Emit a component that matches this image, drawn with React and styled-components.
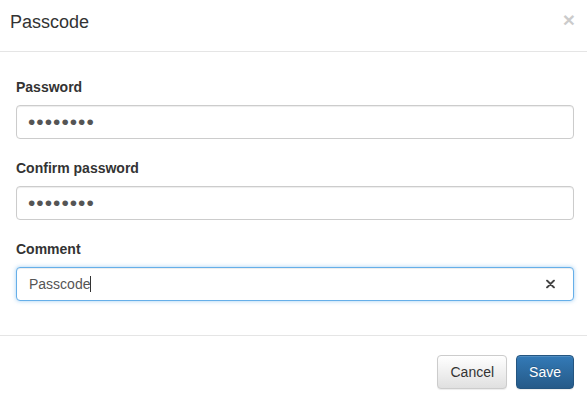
import React, { useState } from "react";
import styled, { createGlobalStyle, css } from "styled-components";

const GlobalStyle = createGlobalStyle`
  html, body {
    margin: 0;
    padding: 0;
    background: #fff;
  }
  body {
    font-family: "Liberation Sans", Arial, Helvetica, sans-serif;
    font-size: 14px;
    color: #333;
  }
  * {
    box-sizing: border-box;
  }
`;

const Modal = styled.div`
  width: 587px;
  height: 401px;
  background: #fff;
  display: flex;
  flex-direction: column;
`;

const Header = styled.div`
  height: 52px;
  padding: 9px 10px 0 10px;
  border-bottom: 1px solid #e5e5e5;
  display: flex;
  justify-content: space-between;
  align-items: flex-start;
`;

const Title = styled.h4`
  margin: 0;
  font-size: 18px;
  font-weight: normal;
  line-height: 26px;
  color: #333;
`;

const Close = styled.button`
  border: 0;
  background: transparent;
  padding: 0;
  margin: 0 2px 0 0;
  font-family: "Liberation Sans", Arial, sans-serif;
  font-size: 21px;
  font-weight: bold;
  line-height: 21px;
  color: #000;
  opacity: 0.2;
  cursor: pointer;
`;

const Body = styled.div`
  padding: 25px 13px 20px 16px;
  border-bottom: 1px solid #e5e5e5;
`;

const Group = styled.div`
  margin-bottom: 19px;
  &:last-child {
    margin-bottom: 14px;
  }
`;

const Label = styled.label`
  display: block;
  font-weight: bold;
  font-size: 14px;
  line-height: 20px;
  margin-bottom: 8px;
  color: #333;
`;

const Field = styled.div`
  position: relative;
`;

const Input = styled.input`
  display: block;
  width: 100%;
  height: 34px;
  padding: 6px 12px;
  font-family: "Liberation Sans", Arial, sans-serif;
  font-size: 14px;
  line-height: 20px;
  color: #555;
  background: #fff;
  border: 1px solid #ccc;
  border-radius: 4px;
  box-shadow: inset 0 1px 1px rgba(0, 0, 0, 0.075);
  outline: none;
  caret-color: transparent;
  ${(p) =>
    p.$focused &&
    css`
      border-color: #66afe9;
      box-shadow: inset 0 1px 1px rgba(0, 0, 0, 0.075),
        0 0 4px rgba(102, 175, 233, 0.6);
    `}
  &[type="password"] {
    font-size: 21px;
    letter-spacing: 1px;
    padding: 4px 11px;
    line-height: 24px;
  }
`;

const Caret = styled.span`
  position: absolute;
  left: 74px;
  top: 9px;
  width: 1px;
  height: 16px;
  background: #333;
  pointer-events: none;
`;

const Clear = styled.span`
  position: absolute;
  right: 19px;
  top: 50%;
  transform: translateY(-50%);
  width: 9px;
  height: 9px;
  display: flex;
  cursor: pointer;
`;

const Footer = styled.div`
  padding: 19px 13px 0 15px;
  display: flex;
  justify-content: flex-end;
  gap: 9px;
`;

const Button = styled.button`
  height: 34px;
  padding: 6px 12px;
  font-family: "Liberation Sans", Arial, sans-serif;
  font-size: 14px;
  line-height: 20px;
  border-radius: 4px;
  border: 1px solid #ccc;
  color: #333;
  background-image: linear-gradient(to bottom, #fff 0, #e0e0e0 100%);
  box-shadow: inset 0 1px 0 rgba(255, 255, 255, 0.15),
    0 1px 1px rgba(0, 0, 0, 0.075);
  cursor: pointer;
  ${(p) =>
    p.$primary &&
    css`
      color: #fff;
      border-color: #245580;
      background-image: linear-gradient(to bottom, #337ab7 0, #265a88 100%);
      text-shadow: 0 -1px 0 rgba(0, 0, 0, 0.2);
    `}
`;

const App = () => {
  const [password, setPassword] = useState("12345678");
  const [confirm, setConfirm] = useState("12345678");
  const [comment, setComment] = useState("Passcode");

  return (
    <Modal>
      <GlobalStyle />
      <Header>
        <Title>Passcode</Title>
        <Close aria-label="Close">×</Close>
      </Header>
      <Body>
        <Group>
          <Label>Password</Label>
          <Input
            type="password"
            value={password}
            onChange={(e) => setPassword(e.target.value)}
          />
        </Group>
        <Group>
          <Label>Confirm password</Label>
          <Input
            type="password"
            value={confirm}
            onChange={(e) => setConfirm(e.target.value)}
          />
        </Group>
        <Group>
          <Label>Comment</Label>
          <Field>
            <Input
              $focused
              type="text"
              value={comment}
              onChange={(e) => setComment(e.target.value)}
            />
            {comment === "Passcode" && <Caret />}
            <Clear onClick={() => setComment("")}>
              <svg width="9" height="9" viewBox="0 0 9 9">
                <path
                  d="M1 1 L8 8 M8 1 L1 8"
                  stroke="#444"
                  strokeWidth="1.8"
                  strokeLinecap="round"
                />
              </svg>
            </Clear>
          </Field>
        </Group>
      </Body>
      <Footer>
        <Button>Cancel</Button>
        <Button $primary>Save</Button>
      </Footer>
    </Modal>
  );
};

export default App;
